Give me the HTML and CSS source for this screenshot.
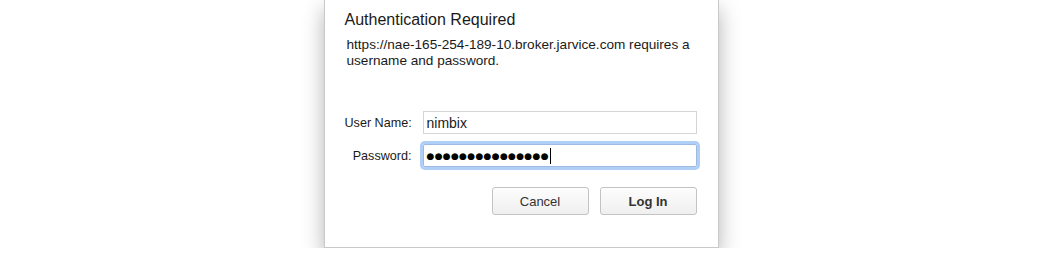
FILE: index.html
```html
<!DOCTYPE html>
<html lang="en">
<head>
  <meta charset="UTF-8">
  <title>Authentication Required</title>
  <link rel="stylesheet" href="styles.css">
</head>
<body>
  <div class="dialog">
    <h1>Authentication Required</h1>
    <p class="message">https://nae-165-254-189-10.broker.jarvice.com requires a username and password.</p>

    <div class="login-form">
      <label class="field-label">User Name:</label>
      <div class="field">nimbix</div>
      <label class="field-label">Password:</label>
      <div class="field focused"><span class="dots">●●●●●●●●●●●●●●●</span><span class="caret"></span></div>
    </div>

    <div class="button-row">
      <button class="dialog-button">Cancel</button>
      <button class="dialog-button primary">Log In</button>
    </div>
  </div>
</body>
</html>
```

FILE: styles.css
```css
body {
  margin: 0;
  background: #fff;
  font-family: 'Liberation Sans', Arial, sans-serif;
  color: #1a1a1a;
}

.dialog {
  box-sizing: border-box;
  width: 395px;
  margin: 0 auto;
  padding: 10px 20px 32px 20px;
  background: #fff;
  border: 1px solid #c9c9c9;
  border-top: none;
  box-shadow: 0 9px 20px rgba(0, 0, 0, 0.3);
}

.dialog h1 {
  margin: 0;
  font-size: 16px;
  font-weight: 400;
  line-height: 20px;
}

.message {
  margin: 7px 0 0 2px;
  font-size: 13.6px;
  line-height: 16px;
}

.login-form {
  display: grid;
  grid-template-columns: 67px 1fr;
  column-gap: 11px;
  row-gap: 10px;
  align-items: center;
  margin-top: 42px;
}

.field-label {
  font-size: 12.6px;
  text-align: right;
  white-space: nowrap;
}

.field {
  box-sizing: border-box;
  height: 23px;
  margin-right: 1px;
  padding: 0 3px;
  border: 1px solid #d4d4d4;
  font-size: 14px;
  line-height: 20px;
  display: flex;
  align-items: center;
}

.field.focused {
  border-color: #9dbbe2;
  box-shadow: 0 0 0 3px #afcff7;
  border-radius: 2px;
}

.dots {
  font-family: 'DejaVu Sans', sans-serif;
  font-size: 9px;
  letter-spacing: 0.3px;
  color: #000;
}

.caret {
  width: 1px;
  height: 16px;
  margin-left: 1px;
  background: #000;
}

.button-row {
  display: flex;
  justify-content: flex-end;
  gap: 11px;
  margin-top: 20px;
  margin-right: 1px;
}

.dialog-button {
  width: 97px;
  height: 28px;
  border: 1px solid #c3c3c3;
  border-radius: 3px;
  background: linear-gradient(#fdfdfd, #efefef);
  font-family: 'Liberation Sans', Arial, sans-serif;
  font-size: 13px;
  color: #333;
  padding: 0;
}

.dialog-button.primary {
  font-weight: 700;
}
```
